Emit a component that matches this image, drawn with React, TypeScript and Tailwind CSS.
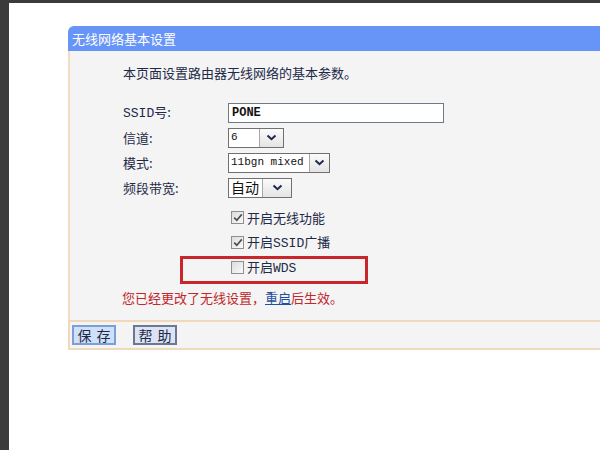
import { ReactNode } from 'react';

const cjk = { fontFamily: '"Noto Sans CJK SC", "Noto Sans", sans-serif' };
const mono = { fontFamily: '"Liberation Mono", "Noto Sans CJK SC", monospace' };

function Chevron() {
  return (
    <svg width="11" height="7" viewBox="0 0 11 7">
      <path d="M1.5 1.5 L5.5 5.2 L9.5 1.5" fill="none" stroke="#1d2a4a" strokeWidth="2" />
    </svg>
  );
}

function Select({ value, w, btn, isCjk }: { value: string; w: number; btn: number; isCjk?: boolean }) {
  return (
    <div className="flex h-[20px] border border-[#707070] bg-white" style={{ width: w }}>
      <div
        className="flex-1 flex items-center pl-[2px] text-[11px] text-[#111] whitespace-nowrap overflow-hidden"
        style={isCjk ? { ...cjk, fontSize: 14 } : mono}
      >
        {value}
      </div>
      <div className="shrink-0 flex items-center justify-center border-l border-[#a8a8a8] bg-gradient-to-b from-[#fbfbfb] to-[#e4e4e4]" style={{ width: btn }}>
        <Chevron />
      </div>
    </div>
  );
}

function Check({ checked, label }: { checked: boolean; label: ReactNode }) {
  return (
    <div className="flex items-center h-[25px] pl-[108px] gap-[3px]">
      <div className="w-[13px] h-[13px] border border-[#8e8f8f] bg-gradient-to-br from-[#dcdcdc] to-[#fbfbfb] flex items-center justify-center">
        {checked && (
          <svg width="10" height="9" viewBox="0 0 10 9">
            <path d="M1.2 4.6 L3.8 7.2 L8.8 1.4" fill="none" stroke="#4a4f58" strokeWidth="1.7" />
          </svg>
        )}
      </div>
      <span className="text-[13px] text-[#1f2a48] whitespace-nowrap">{label}</span>
    </div>
  );
}

function Row({ label, children }: { label: ReactNode; children: ReactNode }) {
  return (
    <div className="flex items-center h-[25px]">
      <div className="w-[105px] text-[13px] text-[#1f2a48]">{label}</div>
      {children}
    </div>
  );
}

export default function App() {
  return (
    <div className="w-[600px] h-[450px] overflow-hidden flex bg-[#3b3b3b]" style={cjk}>
      <div className="w-[9px] shrink-0" />
      <div className="flex-1 mt-[3px] bg-white pl-[59px] pt-[23px] overflow-hidden">
        <div className="w-[600px]">
          {/* title bar */}
          <div className="h-[25px] bg-[#6694f7] rounded-tl-[6px] flex items-center pl-[4px] text-[13px] text-white">
            无线网络基本设置
          </div>

          {/* form */}
          <div className="border-l-2 border-[#f2dcc2] bg-[#f4f4f4] pl-[53px] pt-[13px] pb-[10px]">
            <div className="h-[18px] flex items-center text-[13px] text-[#1f2a48] mb-[18px]">本页面设置路由器无线网络的基本参数。</div>

            <Row label={<><span style={mono}>SSID</span>号:</>}>
              <div className="w-[216px] h-[20px] border border-[#6e7a88] bg-white flex items-center pl-[3px] text-[12px] font-bold text-[#111]" style={mono}>
                PONE
              </div>
            </Row>
            <Row label="信道:">
              <Select value="6" w={56} btn={24} />
            </Row>
            <Row label="模式:">
              <Select value="11bgn mixed" w={102} btn={20} />
            </Row>
            <Row label="频段带宽:">
              <Select value="自动" w={64} btn={29} isCjk />
            </Row>

            <div className="h-[5px]" />
            <Check checked label="开启无线功能" />
            <Check checked label={<>开启<span style={mono}>SSID</span>广播</>} />
            <div className="relative">
              <Check checked={false} label={<>开启<span style={mono}>WDS</span></>} />
              <div className="absolute left-[57px] top-[1px] w-[188px] h-[28px] border-[3px] border-[#c9262c]" />
            </div>

            <div className="h-[25px] flex items-center mt-[5px] -ml-[1px] text-[13px] text-[#c0282c]">
              您已经更改了无线设置，<span className="text-[#1f4fa0] underline">重启</span>后生效。
            </div>
          </div>

          {/* buttons */}
          <div className="border-l-2 border-t-2 border-b-2 border-[#f0d8bb] bg-[#f4f4f4] h-[30px] flex items-center pl-[2px] gap-[17px]">
            <button className="w-[44px] h-[20px] bg-[#cfe0f8] border-2 border-[#7c9fd8] text-[14px] text-[#1f2a48] leading-none whitespace-nowrap flex items-center justify-center gap-[5px]">
              <span>保</span>
              <span>存</span>
            </button>
            <button className="w-[44px] h-[20px] bg-[#dbe3f5] border-2 border-[#6c7890] text-[14px] text-[#1f2a48] leading-none whitespace-nowrap flex items-center justify-center gap-[5px]">
              <span>帮</span>
              <span>助</span>
            </button>
          </div>
        </div>
      </div>
    </div>
  );
}
